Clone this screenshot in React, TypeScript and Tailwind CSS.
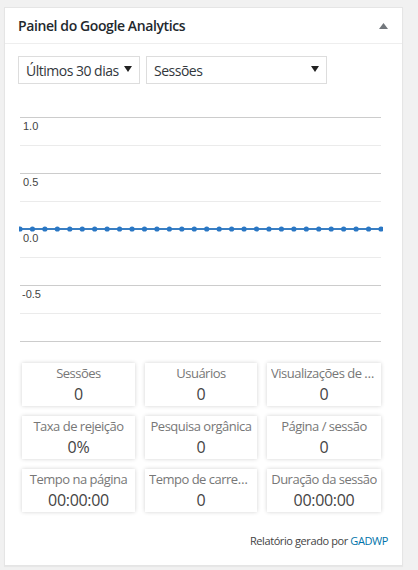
import React from 'react';

const font = { fontFamily: '"Open Sans", "Noto Sans", sans-serif' };

const stats: [string, string][] = [
  ['Sessões', '0'],
  ['Usuários', '0'],
  ['Visualizações de página', '0'],
  ['Taxa de rejeição', '0%'],
  ['Pesquisa orgânica', '0'],
  ['Página / sessão', '0'],
  ['Tempo na página', '00:00:00'],
  ['Tempo de carregamento', '0'],
  ['Duração da sessão', '00:00:00'],
];

function Select({ label, className }: { label: string; className: string }) {
  return (
    <div
      className={`flex h-[28px] items-center justify-between whitespace-nowrap border border-[#dddddd] bg-white pl-[7px] pr-[7px] text-[14px] tracking-[-0.5px] text-[#32373c] ${className}`}
    >
      <span>{label}</span>
      <svg width="8" height="6" viewBox="0 0 8 6" className="mt-[-2px]">
        <path d="M0 0h8L4 6z" fill="#222" />
      </svg>
    </div>
  );
}

function Chart() {
  const x0 = 1;
  const x1 = 362;
  const major = [20, 76, 188, 244];
  const minor = [48, 104, 160, 216];
  const points = Array.from({ length: 30 }, (_, i) => x0 + (i * (x1 - x0)) / 29);
  const labels: [number, string][] = [
    [33, '1.0'],
    [89, '0.5'],
    [145, '0.0'],
    [201, '-0.5'],
  ];
  return (
    <svg width="364" height="250" className="ml-[14px] block">
      {minor.map((y) => (
        <line key={y} x1={x0} x2={x1} y1={y + 0.5} y2={y + 0.5} stroke="#ebebeb" />
      ))}
      {major.map((y) => (
        <line key={y} x1={x0} x2={x1} y1={y + 0.5} y2={y + 0.5} stroke="#cccccc" />
      ))}
      {labels.map(([y, t]) => (
        <text
          key={t}
          x={t.startsWith('-') ? 3 : 4}
          y={y}
          fontSize="11"
          fill="#444"
          style={{ fontFamily: '"Liberation Sans", Arial, sans-serif' }}
        >
          {t}
        </text>
      ))}
      <line x1={x0} x2={x1} y1={132} y2={132} stroke="#3a7fc3" strokeWidth="2" />
      {points.map((x) => (
        <circle key={x} cx={x} cy={132} r="2.6" fill="#2a77c4" />
      ))}
    </svg>
  );
}

export default function App() {
  return (
    <div className="h-[570px] w-[418px] bg-[#f1f1f1] pl-[4px] pt-[7px]" style={font}>
      <div className="w-[399px] border border-[#e5e5e5] bg-white shadow-[0_1px_1px_rgba(0,0,0,0.04)]">
        <div className="flex h-[36px] items-center justify-between border-b border-[#eeeeee] pl-[13px] pr-[14px]">
          <h2 className="whitespace-nowrap text-[14px] font-semibold tracking-[-0.4px] text-[#23282d]">
            Painel do Google Analytics
          </h2>
          <svg width="9" height="6" viewBox="0 0 9 6">
            <path d="M0 6h9L4.5 0z" fill="#72777c" />
          </svg>
        </div>
        <div className="pt-[12px]">
          <div className="flex gap-[6px] pl-[13px]">
            <Select label="Últimos 30 dias" className="w-[122px]" />
            <Select label="Sessões" className="w-[181px]" />
          </div>
          <div className="mt-[13px]">
            <Chart />
          </div>
          <div className="mt-[16px] grid grid-cols-[113px_112px_114px] gap-x-[10px] gap-y-[10px] pl-[17px]">
            {stats.map(([label, value]) => (
              <div
                key={label}
                className="flex h-[43px] flex-col items-center justify-center bg-white px-[4px] shadow-[0_0_4px_rgba(0,0,0,0.18)]"
              >
                <div className="w-full truncate text-center text-[13px] leading-[17px] tracking-[-0.5px] text-[#777777]">
                  {label}
                </div>
                <div className="mt-[2px] text-[16px] leading-[21px] tracking-[-0.3px] text-[#444444]">
                  {value}
                </div>
              </div>
            ))}
          </div>
          <div className="whitespace-nowrap pb-[15px] pr-[14px] pt-[21px] text-right text-[11px] tracking-[-0.4px] text-[#444444]">
            Relatório gerado por <span className="text-[#0073aa]">GADWP</span>
          </div>
        </div>
      </div>
    </div>
  );
}
